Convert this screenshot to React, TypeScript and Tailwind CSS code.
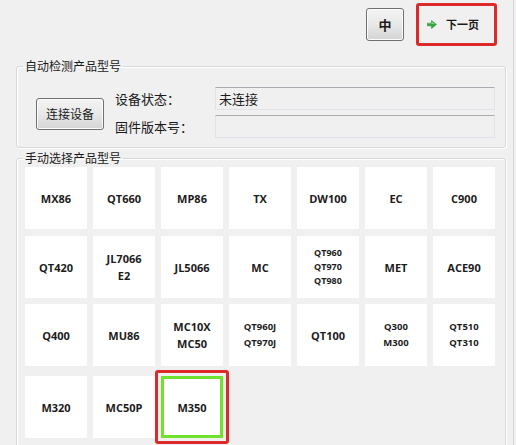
import type { ReactNode } from "react";

type Tile = {
  lines: string[];
  size?: "normal" | "small" | "mid";
  selected?: boolean;
};

const rows: Tile[][] = [
  [
    { lines: ["MX86"] },
    { lines: ["QT660"] },
    { lines: ["MP86"] },
    { lines: ["TX"] },
    { lines: ["DW100"] },
    { lines: ["EC"] },
    { lines: ["C900"] },
  ],
  [
    { lines: ["QT420"] },
    { lines: ["JL7066", "E2"] },
    { lines: ["JL5066"] },
    { lines: ["MC"] },
    { lines: ["QT960", "QT970", "QT980"], size: "small" },
    { lines: ["MET"] },
    { lines: ["ACE90"] },
  ],
  [
    { lines: ["Q400"] },
    { lines: ["MU86"] },
    { lines: ["MC10X", "MC50"] },
    { lines: ["QT960J", "QT970J"], size: "mid" },
    { lines: ["QT100"] },
    { lines: ["Q300", "M300"], size: "mid" },
    { lines: ["QT510", "QT310"], size: "mid" },
  ],
  [
    { lines: ["M320"] },
    { lines: ["MC50P"] },
    { lines: ["M350"], selected: true },
  ],
];

const sizeClass = {
  normal: "text-[11px] leading-[17px]",
  small: "text-[9px] leading-[14px]",
  mid: "text-[9.5px] leading-[16px]",
};

const rowGap = ["mt-0", "mt-[7px]", "mt-[6px]", "mt-[10px]"];

function ProductTile({ tile }: { tile: Tile }) {
  const size = tile.size ?? "normal";
  return (
    <div className="relative h-[62px] w-[62px]">
      <button
        type="button"
        className={`flex h-full w-full flex-col items-center justify-center bg-white font-bold text-[#1c1c1c] ${sizeClass[size]} ${
          tile.selected ? "border-[3px] border-[#6ee22c]" : ""
        }`}
      >
        {tile.lines.map((line) => (
          <span key={line}>{line}</span>
        ))}
      </button>
      {tile.selected && (
        <div className="pointer-events-none absolute -inset-[6px] rounded-[3px] border-[3px] border-[#dc2a2a]" />
      )}
    </div>
  );
}

function WinButton({
  children,
  className,
}: {
  children: ReactNode;
  className: string;
}) {
  return (
    <button
      type="button"
      className={`rounded-[3px] border border-[#707070] bg-gradient-to-b from-[#f4f4f4] via-[#e8e8e8] to-[#d4d4d4] shadow-[inset_0_0_0_1px_#fcfcfc] text-[#1a1a1a] ${className}`}
    >
      {children}
    </button>
  );
}

function GroupBox({
  title,
  className,
  children,
}: {
  title: string;
  className: string;
  children: ReactNode;
}) {
  return (
    <fieldset
      className={`ml-[16px] w-[490px] rounded-[3px] border border-[#d5d9dd] pl-[6px] shadow-[inset_1px_1px_0_#ffffff,1px_1px_0_#ffffff] ${className}`}
    >
      <legend className="px-[2px] text-[12px] leading-[16px] text-[#1a1a1a]">
        {title}
      </legend>
      {children}
    </fieldset>
  );
}

function ReadonlyField({ value }: { value?: string }) {
  return (
    <div className="flex h-[23px] w-[280px] items-center border border-[#e2e3ea] border-t-[#a9abb0] bg-[#f0f0f0] pl-[3px] text-[13px] text-[#1a1a1a]">
      {value}
    </div>
  );
}

export default function App() {
  return (
    <div
      className="relative h-[445px] w-[516px] overflow-hidden bg-[#f0f0f0]"
      style={{
        fontFamily:
          '"Noto Sans CJK SC", "Open Sans", "Liberation Sans", sans-serif',
      }}
    >
      <div className="flex h-[58px] items-start justify-end gap-[12px] pr-[19px] pt-[3px]">
        <WinButton className="mt-[5px] h-[33px] w-[38px] text-[13px] font-bold">
          中
        </WinButton>
        <button
          type="button"
          className="flex h-[43px] w-[81px] items-center rounded-[3px] border-[3px] border-[#dc2a2a] pl-[8px] text-[11px] font-bold text-[#1a1a1a]"
        >
          <svg width="10" height="9" viewBox="0 0 10 9" className="mr-[9px]">
            <path
              d="M0.5 3.2 H4.6 V0.6 L9.4 4.5 L4.6 8.4 V5.8 H0.5 Z"
              fill="#34a83a"
              stroke="#1f8a2a"
              strokeWidth="0.6"
              strokeLinejoin="round"
            />
            <path d="M1 3.6 H5 V1.6 L8 4 H1 Z" fill="#7cd672" />
          </svg>
          下一页
        </button>
      </div>

      <GroupBox title="自动检测产品型号" className="pb-[9px]">
        <div className="flex items-center pt-[13px]">
          <WinButton className="ml-[13px] mt-[3px] h-[32px] w-[68px] text-[12px]">
            连接设备
          </WinButton>
          <div className="ml-[11px] flex w-[100px] flex-col gap-[5px] text-[13px] text-[#1a1a1a]">
            <span className="leading-[23px]">设备状态：</span>
            <span className="leading-[23px]">固件版本号：</span>
          </div>
          <div className="flex flex-col gap-[5px]">
            <ReadonlyField value="未连接" />
            <ReadonlyField />
          </div>
        </div>
      </GroupBox>

      <GroupBox title="手动选择产品型号" className="mt-[2px] h-[320px]">
        <div
          className="ml-[2px] flex flex-col pt-[1px]"
          style={{ fontFamily: '"Open Sans", "Liberation Sans", sans-serif' }}
        >
          {rows.map((row, i) => (
            <div key={i} className={`flex gap-[6px] ${rowGap[i]}`}>
              {row.map((tile) => (
                <ProductTile key={tile.lines.join("-")} tile={tile} />
              ))}
            </div>
          ))}
        </div>
      </GroupBox>

      <div className="absolute right-[2px] top-0 h-full w-px bg-[#d3d9e0]" />
    </div>
  );
}
